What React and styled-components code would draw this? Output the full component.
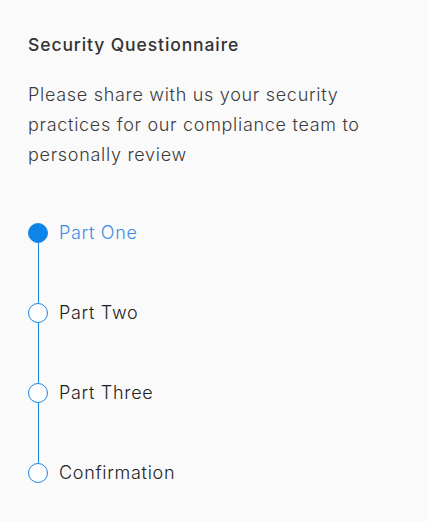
import React from "react";
import styled, { createGlobalStyle } from "styled-components";

const GlobalStyle = createGlobalStyle`
    html, body {
        margin: 0;
        padding: 0;
        background: #fafafa;
    }
    body {
        font-family: Inter, "Noto Sans", sans-serif;
        color: #333;
    }
`;

const steps = ["Part One", "Part Two", "Part Three", "Confirmation"];

const Panel = styled.div`
    padding: 33px 29px 0 28px;
`;

const Title = styled.h2`
    margin: 0;
    font-size: 17.5px;
    font-weight: 500;
    line-height: 24px;
    letter-spacing: 0.9px;
    color: #333;
`;

const Intro = styled.p`
    margin: 23px 0 0 0;
    font-size: 18px;
    font-weight: 300;
    line-height: 30px;
    letter-spacing: 0.7px;
    color: #3c3c3c;
`;

const StepList = styled.ol`
    list-style: none;
    margin: 53px 0 0 0;
    padding: 0;
`;

const Step = styled.li`
    position: relative;
    display: flex;
    align-items: center;
    gap: 11px;
    height: 20px;
    margin-bottom: 60px;

    &:not(:last-child)::after {
        content: "";
        position: absolute;
        left: 10px;
        top: 20px;
        width: 1px;
        height: 60px;
        background: #1a86e8;
    }
`;

const Dot = styled.span`
    box-sizing: border-box;
    width: 20px;
    height: 20px;
    border-radius: 50%;
    border: 1px solid #1a86e8;
    background: ${(p) => (p.active ? "#0d84ea" : "#fff")};
    flex-shrink: 0;
`;

const Label = styled.span`
    font-size: 18px;
    font-weight: 300;
    line-height: 20px;
    letter-spacing: 0.7px;
    color: ${(p) => (p.active ? "#3d8be8" : "#222")};
`;

const App = () => {
    return (
        <>
            <GlobalStyle />
            <Panel>
                <Title>Security Questionnaire</Title>
                <Intro>
                    Please share with us your security practices for our
                    compliance team to personally review
                </Intro>
                <StepList>
                    {steps.map((s, i) => (
                        <Step key={s}>
                            <Dot active={i === 0} />
                            <Label active={i === 0}>{s}</Label>
                        </Step>
                    ))}
                </StepList>
            </Panel>
        </>
    );
};

export default App;
